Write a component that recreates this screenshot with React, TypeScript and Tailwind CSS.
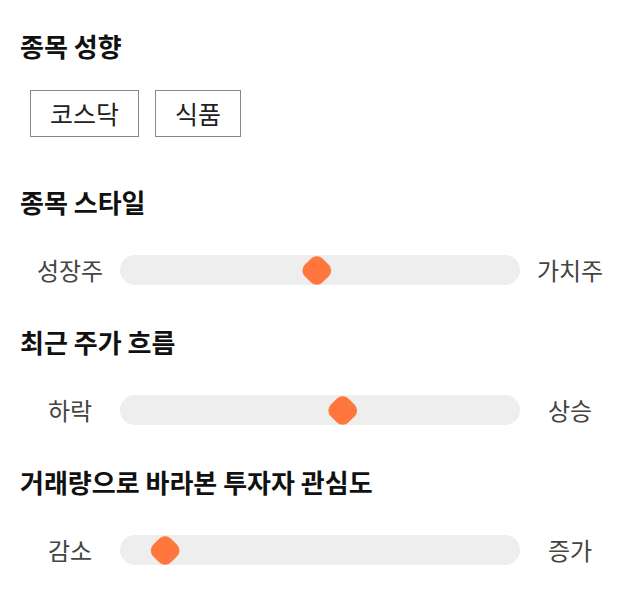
const FONT = "font-['Noto_Sans_CJK_KR','Noto_Sans',sans-serif]";

type SliderProps = {
  left: string;
  right: string;
  value: number;
};

function RangeRow({ left, right, value }: SliderProps) {
  return (
    <div className="flex items-center h-[30px]">
      <div className="w-[100px] text-center text-[24px] text-[#444]">{left}</div>
      <div className="relative flex-1 h-[30px] rounded-full bg-[#eeeeee]">
        <div
          className="absolute top-0 w-[30px] h-[30px] flex items-center justify-center"
          style={{ left: `${value}%`, transform: `translateX(-${value}%)` }}
        >
          <div className="w-[25px] h-[25px] rotate-45 rounded-[8px] bg-[#ff773d]" />
        </div>
      </div>
      <div className="w-[100px] text-center text-[24px] text-[#444]">{right}</div>
    </div>
  );
}

function Heading({ children }: { children: string }) {
  return <h2 className="h-8 leading-8 text-[26px] font-bold text-[#111]">{children}</h2>;
}

export default function App() {
  return (
    <div className={`w-[640px] h-[606px] bg-white px-5 pt-[30px] ${FONT}`}>
      <Heading>종목 성향</Heading>

      <div className="flex gap-4 ml-[10px] mt-[28px]">
        <div className="h-[47px] px-[19px] flex items-center border border-[#888] text-[25px] text-[#222]">
          코스닥
        </div>
        <div className="h-[47px] px-[19px] flex items-center border border-[#888] text-[25px] text-[#222]">
          식품
        </div>
      </div>

      <div className="mt-[49px]">
        <Heading>종목 스타일</Heading>
      </div>
      <div className="mt-[37px]">
        <RangeRow left="성장주" right="가치주" value={49} />
      </div>

      <div className="mt-[41px]">
        <Heading>최근 주가 흐름</Heading>
      </div>
      <div className="mt-[37px]">
        <RangeRow left="하락" right="상승" value={56} />
      </div>

      <div className="mt-[41px]">
        <Heading>거래량으로 바라본 투자자 관심도</Heading>
      </div>
      <div className="mt-[37px]">
        <RangeRow left="감소" right="증가" value={8} />
      </div>
    </div>
  );
}
